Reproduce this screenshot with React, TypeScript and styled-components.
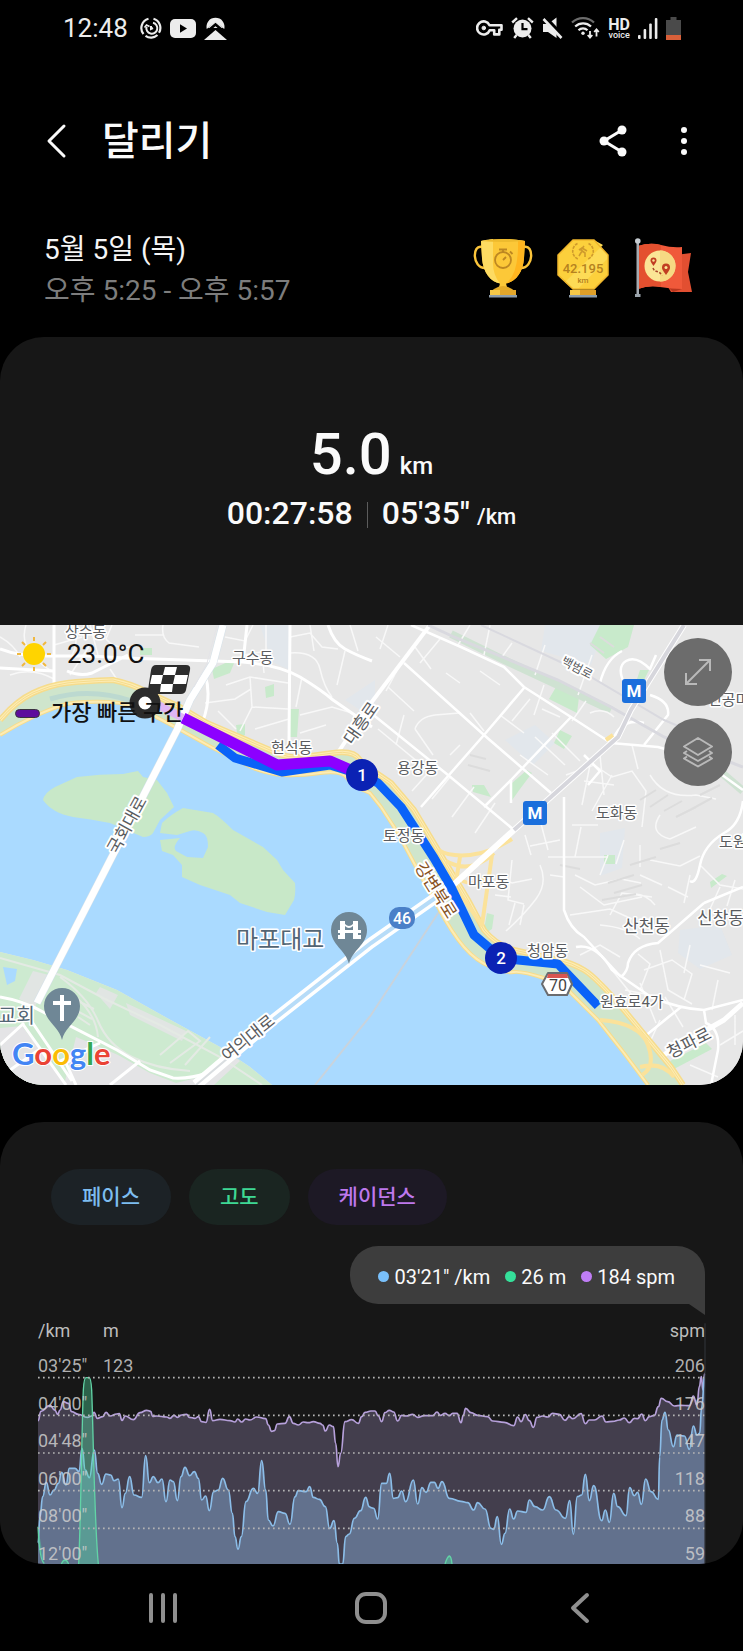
import React from "react";
import styled, { createGlobalStyle } from "styled-components";

const GlobalStyle = createGlobalStyle`
	* {
		box-sizing: border-box;
	}

	body {
		margin: 0;
		background: #000;
		color: #fafafa;
		font-family: Roboto, "Noto Sans CJK KR", sans-serif;
	}
`;

const Page = styled.div`
	display: flex;
	flex-direction: column;
`;

const IconButton = styled.button`
	display: flex;
	align-items: center;
	justify-content: center;
	padding: 0;
	border: 0;
	background: none;
	color: inherit;
	cursor: pointer;
`;

/* status bar */

const StatusBar = styled.div`
	display: flex;
	align-items: center;
	justify-content: space-between;
	height: 56px;
	padding: 0 62px 0 63px;
	color: #ececec;
`;

const StatusGroup = styled.div`
	display: flex;
	align-items: center;
	gap: ${(props: { $gap: number }) => props.$gap}px;
`;

const Clock = styled.time`
	margin-right: 4px;
	font-size: 26px;
	line-height: 30px;
`;

const HdVoice = styled.div`
	display: flex;
	flex-direction: column;
	align-items: center;
	font-size: 9px;
	line-height: 8px;
	font-weight: 500;

	b {
		font-size: 16px;
		line-height: 13px;
	}
`;

/* title */

const Header = styled.header`
	display: flex;
	align-items: center;
	height: 170px;
	padding: 0 48px 0 36px;
`;

const Title = styled.h1`
	flex: 1;
	margin: 0 0 0 26px;
	padding-top: 2px;
	font-size: 40px;
	line-height: 48px;
	font-weight: 500;
`;

const Actions = styled.div`
	display: flex;
	gap: 40px;
`;

const Summary = styled.section`
	display: flex;
	align-items: center;
	justify-content: space-between;
	padding: 3px 50px 26px 44px;
`;

const DateText = styled.p`
	margin: 0;
	font-size: 28px;
	line-height: 41px;
	color: ${(props: { $dim?: boolean }) => (props.$dim ? "#7d7d7d" : "#f5f5f5")};
`;

const Badges = styled.div`
	display: flex;
	gap: 20px;
	padding-bottom: 4px;
`;

/* distance card */

const Card = styled.section`
	overflow: hidden;
	border-radius: 44px;
	background: #171717;
`;

const Stats = styled.div`
	display: flex;
	flex-direction: column;
	align-items: center;
	height: 288px;
	padding-top: 87px;
	font-weight: 500;
`;

const Distance = styled.div`
	display: flex;
	align-items: baseline;
	gap: 8px;
	font-size: 58px;
	line-height: 60px;
`;

const StatRow = styled.div`
	display: flex;
	align-items: baseline;
	font-size: 32px;
	line-height: 34px;
`;

const Divider = styled.span`
	width: 1px;
	height: 26px;
	margin: 0 14px;
	align-self: center;
	background: #5c5c5c;
`;

const Unit = styled.small`
	font-size: ${(props: { $size: number }) => props.$size}px;
`;

const PaceUnit = styled(Unit)`
	margin-left: 7px;
`;

/* map */

const MapArea = styled.div`
	position: relative;
	height: 460px;
	background: #e8e8e8;
	color: #111;
`;

const MapDrawing = styled.svg`
	display: block;
	width: 100%;
	height: 100%;
	font-family: Roboto, "Noto Sans CJK KR", sans-serif;
`;

const MapInfo = styled.div`
	position: absolute;
	top: 8px;
	left: 15px;
`;

const Weather = styled.div`
	display: flex;
	align-items: center;
	gap: 16px;
	padding-left: 2px;
	font-size: 26px;
	line-height: 42px;
`;

const Legend = styled.div`
	display: flex;
	align-items: center;
	gap: 11px;
	margin-top: 22px;
	font-size: 22px;
	line-height: 32px;
	font-weight: 500;
`;

const LegendMark = styled.span`
	width: 25px;
	height: 9px;
	border: 1px solid #3a3340;
	border-radius: 5px;
	background: #5d0d9c;
`;

const MapButtons = styled.div`
	position: absolute;
	top: 13px;
	right: 11px;
	display: flex;
	flex-direction: column;
	gap: 12px;
`;

const RoundButton = styled(IconButton)`
	width: 68px;
	height: 68px;
	border-radius: 50%;
	background: #6c6c6c;
	color: #b9b9b9;
`;

type LabelProps = { $size?: number; $color?: string };

const PlaceName = styled.text<LabelProps>`
	fill: ${(props) => props.$color || "#5a5c60"};
	stroke: #fff;
	stroke-width: 3px;
	stroke-linejoin: round;
	paint-order: stroke;
	font-size: ${(props) => props.$size || 15}px;
`;

const RoadName = styled(PlaceName)`
	stroke-width: 4px;
	text-anchor: middle;
	dominant-baseline: central;
`;

/* chart card */

const ChartCard = styled(Card)`
	display: flex;
	flex-direction: column;
	margin-top: 37px;
	padding: 47px 38px 0;
`;

const Chips = styled.div`
	display: flex;
	gap: 18px;
	margin-left: 13px;
`;

const Chip = styled.button`
	height: 56px;
	padding: 0 31px 4px;
	border: 0;
	border-radius: 28px;
	background: ${(props: { $bg: string; $color: string }) => props.$bg};
	color: ${(props) => props.$color};
	font-family: inherit;
	font-size: 21px;
	font-weight: 500;
	cursor: pointer;
`;

const Bubble = styled.div`
	position: relative;
	display: flex;
	align-items: center;
	align-self: flex-end;
	gap: 15px;
	height: 58px;
	margin-top: 21px;
	padding: 3px 30px 0 28px;
	border-radius: 28px 28px 0 28px;
	background: #3d3d3d;
	font-size: 20px;

	&::after {
		content: "";
		position: absolute;
		top: 100%;
		right: 0;
		border-top: 11px solid #3d3d3d;
		border-left: 16px solid transparent;
	}
`;

const Reading = styled.span`
	display: flex;
	align-items: center;
	gap: 5px;

	&::before {
		content: "";
		width: 11px;
		height: 11px;
		border-radius: 50%;
		background: ${(props: { $dot: string }) => props.$dot};
	}
`;

const Units = styled.div`
	display: grid;
	grid-template-columns: 65px 1fr auto;
	margin-top: 16px;
	font-size: 18px;
	line-height: 22px;
	color: #bdbdbd;
`;

const Plot = styled.div`
	display: grid;
	height: 208px;
	margin-top: 14px;

	> * {
		grid-area: 1 / 1;
	}
`;

const PlotDrawing = styled.svg`
	display: block;
	width: 100%;
	height: 208px;
	overflow: visible;
`;

const Ticks = styled.div`
	display: flex;
	flex-direction: column;
	justify-content: space-between;
	font-size: 18px;
	line-height: 20px;
	color: rgba(205, 205, 205, 0.85);
`;

const Tick = styled.div`
	display: grid;
	grid-template-columns: 65px 1fr auto;
`;

/* bottom keys */

const NavBar = styled.nav`
	display: grid;
	grid-template-columns: repeat(3, 1fr);
	height: 87px;
	padding: 0 59px;
	color: #8f8f8f;
`;

type Point = [number, number];

const HALF = 1113;

const parse = (text: string): Point[] =>
	text
		.trim()
		.split(/\s+/)
		.map((pair) => pair.split(",").map(Number) as Point);

const series = (first: string, second: string): Point[] => [
	...parse(first),
	...parse(second).map(([x, y]): Point => [x + HALF, y]),
];

const smooth = (points: Point[]) =>
	points
		.map(([x, y], i) => {
			if (i === 0) return `M${x} ${y}`;
			const [px, py] = points[i - 1];
			const mid = (px + x) / 2;
			return `C${mid} ${py} ${mid} ${y} ${x} ${y}`;
		})
		.join("");

const area = (points: Point[]) =>
	`${smooth(points)}L${points[points.length - 1][0]} 762L${points[0][0]} 762Z`;

const cadence = series(
	`114,332 123,304 150,286 165,301 173,313 180,300 190,275 205,280 215,305 235,313 262,322 275,318 282,307 292,325
	308,320 318,307 330,318 350,312 358,311 366,331 376,318 400,329 420,308 440,301 452,304 458,319 470,318 500,321
	510,325 522,316 532,322 545,315 560,313 568,322 585,325 595,320 605,335 618,337 629,298 638,332 660,328 690,332
	705,336 713,327 725,336 737,327 750,330 770,321 797,326 805,345 815,364 823,362 832,342 855,340 868,320 880,340
	895,345 910,336 925,338 940,335 960,340 968,345 976,363 988,345 1000,350 1007,400 1014,470 1022,430 1035,335
	1055,329 1075,340 1085,320 1095,307`,
	`0,303 12,303 22,318 32,335 42,308 55,301 68,306 80,333 92,316 105,318 125,313 140,322 160,317 185,317 198,306
	208,316 222,310 235,317 245,310 258,310 270,338 277,315 284,295 300,308 320,316 350,320 365,333 400,337 428,347
	440,321 450,335 463,314 475,332 487,352 498,322 515,318 530,321 545,310 565,313 582,331 595,320 605,326 630,311
	643,341 655,330 670,330 693,318 705,336 725,334 745,330 760,324 775,338 790,325 800,326 812,312 823,332 835,320
	850,316 862,290 871,265 890,275 910,288 930,286 955,287 967,258 978,285 985,230 991,200 996,240 1001,190`
);

const pace = series(
	`114,700 120,620 128,560 139,517 150,555 162,540 175,520 185,487 198,525 208,475 225,475 237,485 246,415 256,480
	268,503 283,420 293,490 305,523 318,492 332,495 342,512 355,507 366,593 376,550 389,500 402,555 425,562 437,437
	448,518 460,500 474,518 486,507 498,575 510,510 520,515 532,572 543,500 555,472 569,497 583,485 595,505 605,570
	617,558 628,602 641,545 655,540 668,505 685,540 697,610 705,680 714,718 724,680 738,575 760,535 773,550 785,452
	797,540 805,630 819,648 835,605 855,610 870,643 885,560 895,542 918,545 929,530 940,562 958,568 976,590 989,655
	1002,632 1012,700 1018,762 1028,762 1037,680 1048,672 1063,625 1082,602 1097,562 1108,590`,
	`0,593 8,595 20,627 32,520 46,520 56,490 67,565 80,563 92,543 104,575 127,510 140,582 153,533 165,547 180,517
	190,517 201,535 213,515 235,565 270,574 290,578 308,600 320,578 342,597 360,655 368,658 379,620 391,703 402,670
	416,597 428,627 440,603 465,607 475,570 492,590 515,600 535,560 555,600 583,625 596,572 607,673 619,560 632,555
	643,493 655,572 668,527 692,632 703,600 715,637 728,550 740,590 765,617 776,533 790,557 800,547 811,583 824,507
	840,545 862,568 866,440 873,330 882,307 892,360 907,410 918,375 940,378 955,418 967,348 978,375 986,370 992,290
	1001,200`
);

const ticks = [
	["03'25\"", "123", "206"],
	["04'00\"", "", "176"],
	["04'48\"", "", "147"],
	["06'00\"", "", "118"],
	["08'00\"", "", "88"],
	["12'00\"", "", "59"],
];

function StatusIcons() {
	return (
		<StatusBar>
			<StatusGroup $gap={8}>
				<Clock>12:48</Clock>
				<svg width="22" height="22" viewBox="0 0 22 22" fill="none" stroke="currentColor">
					<path d="M8.500 1.800A9.500 9.500 0 0 0 3.500 17M5.500 18.800A9.500 9.500 0 0 0 17.500 18M19 15.800A9.500 9.500 0 0 0 13.500 1.800" strokeWidth="2.200" />
					<path d="M13 5.800a5.500 5.500 0 1 1-6.500 4" strokeWidth="2" />
					<path d="M4.500 10.500l2-2.500 3 1.500" strokeWidth="1.600" />
					<path d="M11 9v3l2-1" strokeWidth="2" />
				</svg>
				<svg width="26" height="19" viewBox="0 0 26 19">
					<rect width="26" height="19" rx="5" fill="currentColor" />
					<path d="M10 5.200v8.600l7-4.300z" fill="#000" />
				</svg>
				<svg width="23" height="23" viewBox="0 0 23 23" fill="currentColor">
					<path d="M2.800 12A9 9 0 1 1 20.200 12L11.500 4.800z" />
					<path d="M11.500 4L19 11H4z" />
					<path d="M0 23l11.500-10L23 23z" />
					<path d="M2 15.500l9.500-8 9.500 8" fill="none" stroke="#000" strokeWidth="2.600" />
				</svg>
			</StatusGroup>
			<StatusGroup $gap={8}>
				<svg width="27" height="16" viewBox="0 0 27 16" fill="none" stroke="currentColor" strokeWidth="2.600">
					<path d="M13.500 5.200H25.500V9.800H23.300V14.400H18.200V10.200H13.700A6.500 6.500 0 1 1 13.500 5.200Z" strokeLinejoin="round" />
					<circle cx="7.800" cy="8" r="1.800" fill="currentColor" strokeWidth="1" />
				</svg>
				<svg width="23" height="22" viewBox="0 0 23 22">
					<circle cx="11.500" cy="11.500" r="9" fill="currentColor" />
					<path d="M1.200 5.500L6 1.200M21.800 5.500L17 1.200M3.200 21l2.400-3M19.800 21l-2.400-3" stroke="currentColor" strokeWidth="2.400" />
					<path d="M11.500 6v6.200h5" fill="none" stroke="#000" strokeWidth="2.200" />
				</svg>
				<svg width="21" height="22" viewBox="0 0 21 22" fill="currentColor">
					<path d="M1 7h5l8.500-6.500V21L6 15H1z" />
					<path d="M2.500 .5L20.500 19.500" stroke="#000" strokeWidth="5" />
					<path d="M1.500 2L19.500 21" stroke="currentColor" strokeWidth="2.600" />
				</svg>
				<svg width="29" height="22" viewBox="0 0 29 22" fill="none" stroke="currentColor" strokeWidth="2.200">
					<path d="M1 5.500A16 16 0 0 1 23 5.500" stroke="#6c6c6c" />
					<path d="M4.200 9.500A11.500 11.500 0 0 1 20 9.500M7.500 13.200A6.500 6.500 0 0 1 16.500 13.200" />
					<circle cx="12" cy="16.200" r="1.700" fill="currentColor" stroke="none" />
					<path d="M19 14v6M16.700 18l2.300 2.600 2.300-2.600M25.500 19.500v-6.500M23.200 15l2.300-2.600 2.300 2.600" strokeWidth="1.800" />
				</svg>
				<HdVoice>
					<b>HD</b>
					voice
				</HdVoice>
				<svg width="20" height="21" viewBox="0 0 20 21" fill="currentColor">
					<rect y="17" width="2.600" height="4" rx="1" />
					<rect x="5.600" y="11" width="2.600" height="10" rx="1" />
					<rect x="11.200" y="5.500" width="2.600" height="15.500" rx="1" />
					<rect x="16.800" width="2.600" height="21" rx="1" />
				</svg>
				<svg width="15" height="23" viewBox="0 0 15 23">
					<path d="M4.500 0h6v3H15v20H0V3h4.500z" fill="#4a4a4a" />
					<path d="M0 18h15v5H0z" fill="#d9603a" />
				</svg>
			</StatusGroup>
		</StatusBar>
	);
}

function TrophyBadge() {
	return (
		<svg width="60" height="60" viewBox="0 0 60 60" role="img" aria-label="최고 기록">
			<g fill="none" stroke="#fbc43a" strokeWidth="2.400">
				<path d="M9 9C-1 6-1 30 12 30" />
				<path d="M51 9C61 6 61 30 48 30" />
			</g>
			<path d="M8 3Q30-1 52 3L51 20C50 35 42 44 33 45.500L34 49H26L27 45.500C18 44 10 35 9 20Z" fill="#fcc838" />
			<path d="M8 3Q14 1.500 20 1L20 25Q20 37 27 45.500C18 44 10 35 9 20Z" fill="#fddb62" />
			<path d="M45 2L52 3L51 20C50 35 42 44 33 45.500Q46 36 45 2" fill="#ffb51f" />
			<path d="M8 3Q30-1 52 3Q30 5 8 3" fill="#eebb2e" />
			<path d="M21 51Q30 45 39 51L43 54H17Z" fill="#e6ac28" />
			<path d="M17 52h26v5H17z" fill="#e2a62a" />
			<path d="M17 52h10v5H17z" fill="#f5c848" />
			<path d="M16 57h28v2.500H16z" fill="#8d9daa" />
			<g fill="none" stroke="#bd8722" strokeWidth="1.800">
				<circle cx="30" cy="22" r="8" />
				<path d="M30 22l3-3M26 11.500h8M30 12v3M37 13.500l2.500 2.500" />
			</g>
		</svg>
	);
}

function DistanceBadge() {
	return (
		<svg width="60" height="60" viewBox="0 0 60 60" role="img" aria-label="42.195 km">
			<path d="M20 2H41L55 17V37L41 51H20L5 37V17Z" fill="#fcd03c" />
			<path d="M41 2L55 17V20L25 51H20L12 44L50 7Z" fill="#fddb56" />
			<path d="M20 2H41L55 17V37L41 51H20L5 37V17Z" fill="none" stroke="#f0b62c" strokeWidth="1.500" />
			<g fill="none" stroke="#cf9a2c" strokeWidth="1.600">
				<path d="M24.500 5.500A8.500 8.500 0 0 0 25 21M35.500 5.500A8.500 8.500 0 0 1 35 21" strokeDasharray="3 1" />
				<path d="M31 8l-3 4 4 3v4M26 12l3-2 5 3M29 13l-3 5" />
			</g>
			<text x="30" y="35" textAnchor="middle" fontSize="13" fontWeight="500" fill="#b58220">42.195</text>
			<text x="30" y="45" textAnchor="middle" fontSize="8" fontWeight="500" fill="#b58220">km</text>
			<path d="M17 52h26v5H17z" fill="#df9f28" />
			<path d="M17 52h10v5H17z" fill="#f5c848" />
			<path d="M16 57h28v2.500H16z" fill="#8d9daa" />
		</svg>
	);
}

function FlagBadge() {
	return (
		<svg width="60" height="60" viewBox="0 0 60 60" role="img" aria-label="경로">
			<path d="M35 49V18L58 15L55 34L59 54H38Z" fill="#e24f31" />
			<path d="M35 49L49 48V51L40 54Z" fill="#b8371f" />
			<path d="M5 8Q17 4 28 7T49 9V51Q39 51 27 49T5 51Z" fill="#f0593a" />
			<path d="M5 8Q17 4 28 7V49Q16 47 5 51Z" fill="#e4502f" />
			<circle cx="27" cy="28" r="15.500" fill="#fbe596" />
			<path d="M27 12.500a15.500 15.500 0 0 1 0 31z" fill="#f6d983" />
			<g fill="#c13c22">
				<path d="M20.500 28C18 24.500 17.500 23.500 17.500 22.500a3 3 0 0 1 6 0C23.500 23.500 23 24.500 20.500 28z" />
				<path d="M33 37C29.500 32 29 31 29 29.500a4 4 0 0 1 8 0C37 31 36.500 32 33 37z" />
			</g>
			<circle cx="20.500" cy="22.500" r="1.200" fill="#fbe596" />
			<circle cx="33" cy="29.500" r="1.500" fill="#fbe596" />
			<path d="M20 30q1 3 4 3.500t5 4" fill="none" stroke="#a8452a" strokeWidth="1.500" strokeDasharray="2.500 1.500" />
			<path d="M3.500 3h2.500v53H3.500z" fill="#a4abb2" />
			<circle cx="4.800" cy="3" r="2.800" fill="#c6ccd1" />
			<path d="M2 56h5.500v3H2z" fill="#9aa3ab" />
		</svg>
	);
}

function MetroSign({ x, y }: { x: number; y: number }) {
	return (
		<g>
			<rect x={x} y={y} width="24" height="24" rx="3" fill="#1b6fdc" />
			<text x={x + 12} y={y + 18} textAnchor="middle" fontSize="17" fontWeight="700" fill="#fff">M</text>
		</g>
	);
}

const northBank =
	"M0 110Q16 100 33 92T63 80T110 77Q128 78 143 85L177 103L213 123L253 143Q268 149 283 150T320 148T347 153T370 168L381 182L398 208L414 238L438 282Q452 308 464 322T491 342T514 347T544 353T571 368L598 395L624 428L648 460";
const upperHighway =
	"M0 95Q16 76 33 68T67 58T113 55Q132 59 147 67L180 82L207 98L277 128Q288 133 300 132T333 128T360 135T372 145L391 158L414 185L438 225L468 275L484 305Q496 320 514 325L558 335Q572 338 584 345T624 385L671 442L683 460";

function RouteMap() {
	return (
		<MapDrawing viewBox="0 0 743 460" preserveAspectRatio="xMidYMid slice" role="img" aria-label="달리기 경로 지도">
			<rect width="743" height="460" fill="#e7e7e7" />

			{/* blocks and parks */}
			<path d="M260 0h30v45l-18-8zM545 0h60l-14 40l-50-14zM505 115l30-15l20 18l-22 22zM600 208l25-5l-3 40l-22 8zM680 305l40-5l12 30l-32 14l-22-16zM345 75l30-20v40z" fill="#e2e7ec" />
			<g fill="#c8eacb">
				<path d="M212 44l18-8h5l-5 12l-16 6zM290 84h9l-2 28h-9zM265 62l9-3v12l-8 2zM236 100l9-1v11l-7 4zM140 23h12v7h-12z" />
				<path d="M600 0h34l-6 22l-22 12l-16-14zM556 62l24 2l-3 24l-28-14zM560 105l12 6l-8 13l-10-6zM527 145l5 3l-12 16l-10 14l2-20zM472 160l12 0l7 12l-18-5zM604 230h11v9h-11zM487 288l7 2l-2 14l-9 6zM710 257l12-8l5 2l-16 12zM640 45h9l-6 12l-6-3z" />
				<path d="M670 436l36-18l6 6l-38 20z" />
			</g>
			<path d="M451 9L504 35L558 60L611 85" fill="none" stroke="#cfe2d2" strokeWidth="8" />
			<path d="M722 148l21 18" stroke="#cfe2d2" strokeWidth="8" />

			{/* side streets */}
			<g fill="none" stroke="#f8f8f8" strokeWidth="1.500">
				<path d="M0 12Q14 20 20 32M26 0q-6 18 8 32t20 14M72 0q8 16 0 30M90 0l8 30M112 0l-6 14q8 10 24 8M135 10l28 0M163 0q-2 12 6 18l30 4M54 20l28-8M10 50q22-8 44 4M70 50l20-30M110 44l8 12" />
				<path d="M225 12l20 4l8-16M244 30l22-4v-26M262 26l2 22M226 60l24-8l38 6M205 78l30-4l16-10M250 52l2 30l-12 24M252 82l36 2M218 86l18 18M255 104l34-10M290 12l20-4l12 14l16 2M290 28q26-2 30 16t12 28M302 52l-6 30M300 90l32-8l20 6M310 0l4 26M350 0l8 26M345 26l-8 34M300 108l26-8" />
				<path d="M376 12l24 20M388 0l-8 24M415 22l16 22M440 14l-20 24M446 48l14 10M400 40l-14 26M388 62l26 24M415 104q4-12 20-14l24-2M415 104l18 26M404 90l-8 30M378 104l46 38M430 146l-18 20M450 152l-18 22M474 162l-22 30M495 178l-20 30M460 120l-10 10M470 88l14 18M500 90l24 18M530 74l-18 22M544 60l-10 30M560 92l-18-8M586 76l-14 20M590 88q14-6 24 4M470 0l-12 20M490 0l-6 30M512 18l-10 14M500 60l-20-14M545 20l-10 30M520 130l28 20M535 112l30 28M552 108l28 28M578 70l14-40" />
				<path d="M566 150l28-10l18 12l20-6l14 20l-4 36M590 140l-8 40M600 130l4 40M612 150l-20 36M584 156l30 4M572 200h26M560 215l-30 6M540 195l8 30M525 210l6 20M548 232h60M575 232l6-30M632 120l6 24M650 150q14 24 46 20l20 4M660 190q-12 18 10 24l26-12M624 215l-8 24M640 220v22" />
				<path d="M500 250l12 8l20-4M540 240q8 18-4 34t-30 32M512 235l-4 40l16 4M495 270l16 2M515 278l-6 22M520 300l4-20M550 250l14 2M575 250l20 10l26-6l20 4M580 262l24 18l38-8M570 290l40-6l22 10M600 250l8-20M610 290l12-22l30 4M640 250l22 10M650 235l30 6l20-10M655 280q-12-14-26-10M600 300q26 2 40 14M668 262l20 10M690 250l-6 28M700 240l20 20l23 4M720 262l-10 22M735 255l-8 26" />
				<path d="M644 345l28-10l20 14l-8 26M660 325l8 40l24 14M640 365l10-26l-12-10M690 320l-6 28M700 340l30 8M712 385l6-30M625 365l30 6M640 358l16 40M665 372l18 30M670 390l-26 22M600 355l26 32M612 345l24 30M660 395l-10 22M720 420l23-14M690 440l28 12M735 390v30M580 330l20-10l20 12" />
			</g>
			<g fill="none" stroke="#dcdcdc" strokeWidth="2">
				<path d="M640 175l16-10M650 182l18-12M664 186l18-10M676 192l20-10M690 185l22-12M700 170l20-10M608 258l26-8M614 268l28-8M602 275l34-6M630 240l26-8M660 224l20-6M560 240l20 4M470 130l16 4M468 140l22 6M590 18l14 10M600 12l14 10" />
			</g>

			{/* main streets */}
			<g fill="none" stroke="#fff" strokeWidth="3" strokeLinejoin="round">
				<path d="M0 24Q20 32 54 31H90L125 33L243 37M0 43L53 46M54 0V66M67 46Q80 52 92 48L128 30M243 37Q280 40 300 52T333 75L372 102M290 0L289 118M328 0Q334 18 345 24T372 36M247 0L243 37M205 50Q212 70 203 96" />
				<path d="M411 0L461 22L504 42L524 62L571 92L611 118L658 122L700 134L743 165M404 38L484 110L551 168M371 88L448 150L514 205M524 63L484 110L421 182M571 92L511 155L484 182M511 155V178M564 172V285Q570 304 584 312L621 352M584 130L600 146L588 160" strokeWidth="2.500" />
				<path d="M704 278L658 318Q634 320 628 338Q628 346 621 352M576 322Q596 318 612 345L651 372Q680 384 704 385L743 375M704 278L743 262M743 176Q740 200 724 208Q704 220 700 240T690 256M704 385L706 398Q720 404 718 425L711 460M644 412L681 382M612 118Q620 92 644 98M625 60Q616 42 626 36T650 44L656 30M650 70Q670 76 668 90L644 120M600 58Q606 34 622 26" strokeWidth="2.500" />
				<path d="M621 460L671 425L724 395L743 378" strokeWidth="5" />
			</g>
			<path d="M430 0L371 78L335 132" fill="none" stroke="#fff" strokeWidth="4" />
			<g fill="none" stroke="#d9d9df" strokeWidth="3">
				<path d="M428 0L454 12L558 55L611 82L664 112L743 142" />
				<path d="M481 0L584 48L664 95L690 106" strokeWidth="2" />
			</g>

			{/* river */}
			<path d={`${upperHighway}H648L624 428L598 395L571 368L544 353L514 347L491 342L464 322L438 282L414 238L398 208L381 182L370 168L347 153L320 148L283 150L253 143L213 123L177 103L143 85L110 77L63 80L33 92L0 110Z`} fill="#cfe5cc" />
			<path d="M50 74Q90 62 132 76" fill="none" stroke="#bcd9d0" strokeWidth="5" />
			<path d={`${northBank}H272L250 442L220 422L167 393L117 365L67 345L33 335L0 327Z`} fill="#aadaff" />
			<path d="M43 175Q44 168 55 162L77 152Q100 149 123 149L138 146L143 152L157 155L167 168L174 182L160 195L153 208Q150 212 143 212L110 198Q90 194 73 192Q52 188 43 175Z" fill="#c8e8c8" />
			<path d="M183 183L213 188Q220 192 233 205L263 222L277 235L283 245L295 258Q296 268 294 275L285 290L267 287L240 278L230 270L200 260L182 252V240L173 230L162 226L160 215L180 213Q172 222 176 226L187 232L203 233L208 222Q208 210 203 208Q196 204 190 206L177 210L160 208L162 198Q170 190 183 183Z" fill="#c8e8c8" />
			<path d="M450 270L371 390L315 460" fill="none" stroke="#c9d3dc" strokeWidth="2" />

			{/* south bank */}
			<path d="M0 327L33 335L67 345L117 365L167 393L220 422L250 442L272 460H0Z" fill="#cdead0" />
			<path d="M0 403L22 401L66 460H0ZM76 412Q96 420 118 430L150 448L176 458L200 452L230 428L240 436L214 460H64Z" fill="#e4e4e6" />
			<path d="M33 346l16 4l-14 32l-16-8zM100 362l18 8l-8 14l-14-16zM126 378l60 28l-4 10l-52-26z" fill="#e1e5e3" />
			<path d="M3 342l14 2l-2 12l-8 4z" fill="#aadaff" />
			<g fill="none" stroke="#e4eae4" strokeWidth="2">
				<path d="M0 333L60 350L105 374L160 400L220 432L262 460M60 352Q88 372 98 396T132 432T190 446M98 412Q96 390 76 372M160 430L188 406L200 416L170 438M185 440L210 412M66 380l26 14M70 372l24 12M78 392l12 8" />
			</g>
			<g fill="none" stroke="#fff" strokeWidth="3">
				<path d="M0 372Q24 376 43 387L117 425L150 445L173 453Q190 454 207 448M22 398L66 460M30 394L72 456M0 420L24 398M60 436L100 418M76 460L66 438L90 424M110 460L140 436M0 452L40 424" />
			</g>

			{/* riverside highways */}
			<g fill="none" strokeLinejoin="round">
				<path d={northBank} stroke="#f6dc8c" strokeWidth="4" />
				<path d={northBank} stroke="#fdecb4" strokeWidth="2" />
				<path d={upperHighway} stroke="#f6dc8c" strokeWidth="6" />
				<path d={upperHighway} stroke="#fdecb4" strokeWidth="3" />
				<path d={upperHighway} stroke="#f6dc8c" strokeWidth="1" />
				<path d="M438 225Q450 232 470 230T512 214M446 236Q470 250 494 228M460 232L455 262L482 300L492 230M462 256Q478 262 490 250M600 395Q640 398 648 420T642 450M640 442Q662 436 674 452M606 115l7-5" stroke="#fbe29a" strokeWidth="4" />
			</g>

			{/* bridges */}
			<path d="M223 0L213 38L190 75L177 105L37 378" fill="none" stroke="#d4e1ea" strokeWidth="8" strokeLinejoin="round" />
			<path d="M223 0L213 38L190 75L177 105L37 378" fill="none" stroke="#fff" strokeWidth="7" strokeLinejoin="round" />
			<path d="M217 0L207 38L194 62" fill="none" stroke="#e4e4e8" strokeWidth="1" />
			<path d="M684 0L631 85L618 112L514 205L451 262" fill="none" stroke="#fff" strokeWidth="6" />
			<path d="M684 0L631 85L618 112L514 205" fill="none" stroke="#d6d6dc" strokeWidth="4" />
			<path d="M451 262L371 318L273 395L196 460" fill="none" stroke="#fff" strokeWidth="11" />
			<path d="M451 262L371 318L273 395" fill="none" stroke="#b7dcf8" strokeWidth="4" />
			<path d="M273 395L196 460" fill="none" stroke="#d9dde0" strokeWidth="2" />

			<PlaceName x="65" y="12">상수동</PlaceName>
			<PlaceName x="232" y="38">구수동</PlaceName>
			<PlaceName x="271" y="128">현석동</PlaceName>
			<PlaceName x="397" y="148">용강동</PlaceName>
			<PlaceName x="596" y="193">도화동</PlaceName>
			<PlaceName x="719" y="222">도원</PlaceName>
			<PlaceName x="708" y="80">인공미</PlaceName>
			<PlaceName x="468" y="262">마포동</PlaceName>
			<PlaceName x="623" y="307" $size={17}>산천동</PlaceName>
			<PlaceName x="697" y="299" $size={17}>신창동</PlaceName>

			{/* run */}
			<g fill="none" strokeLinejoin="round">
				<path d="M598 381L558 339L518 335L501 333L474 310L451 262L434 233L401 182L378 158L362 150L330 140L282 147L235 133L218 120" stroke="#0a62f8" strokeWidth="9" />
				<path d="M362 150L330 136L277 140L233 118L183 93" stroke="#8c00ff" strokeWidth="11" />
				<path d="M183 93L158 80L152 68" stroke="#dfb6f5" strokeWidth="8" />
			</g>

			<PlaceName x="383" y="216">토정동</PlaceName>
			<PlaceName x="527" y="331">청암동</PlaceName>
			<PlaceName x="600" y="382">원효로4가</PlaceName>

			<RoadName transform="translate(127 200) rotate(-61)" $size={17}>국회대로</RoadName>
			<RoadName transform="translate(361 98) rotate(-55)" $size={17}>대흥로</RoadName>
			<RoadName transform="translate(577 43) rotate(28)" $size={12}>백범로</RoadName>
			<RoadName transform="translate(436 265) rotate(58)" $size={17} $color="#87531f">강변북로</RoadName>
			<RoadName transform="translate(248 413) rotate(-39)" $size={17}>여의대로</RoadName>
			<RoadName transform="translate(689 418) rotate(-27)" $size={17}>청파로</RoadName>

			<MetroSign x={622} y={54} />
			<MetroSign x={523} y={176} />
			<rect x="389" y="282" width="26" height="22" rx="10" fill="#4a80c8" />
			<text x="402" y="299" textAnchor="middle" fontSize="16" fontWeight="500" fill="#fff">46</text>
			<path d="M548 348H567L572 359L567 370H548L542 359Z" fill="#fff" stroke="#6a6c70" strokeWidth="2" strokeLinejoin="round" />
			<path d="M548 349H567L568 353H547Z" fill="#d95550" />
			<text x="558" y="366" textAnchor="middle" fontSize="16" fill="#444">70</text>

			{/* landmarks */}
			<g fill="#6f8796">
				<path d="M349 339C346 325 331 320 331 305a18 18 0 0 1 36 0C367 320 352 325 349 339z" />
				<path d="M62 415C59 401 44 396 44 381a18 18 0 0 1 36 0C80 396 65 401 62 415z" />
			</g>
			<g fill="#fff">
				<path d="M340 296h5v18h-7v-4h2zM353 296h5v14h3v4h-8zM338 305h23v3h-23zM345 299q4 4 8 0v2q-4 4-8 0z" />
				<path d="M60 370h4v6h7v4h-7v16h-4v-16h-7v-4h7z" />
			</g>
			<PlaceName x="236" y="323" $size={24} $color="#526574">마포대교</PlaceName>
			<PlaceName x="-2" y="398" $size={20} $color="#526574">교회</PlaceName>

			<text x="12" y="440" fontFamily="Lato, sans-serif" fontSize="31" fontWeight="700" stroke="#fff" strokeWidth="2" paintOrder="stroke">
				<tspan fill="#4285f4">G</tspan>
				<tspan fill="#ea4335">o</tspan>
				<tspan fill="#fbbc05">o</tspan>
				<tspan fill="#4285f4">g</tspan>
				<tspan fill="#34a853">l</tspan>
				<tspan fill="#ea4335">e</tspan>
			</text>

			{/* kilometre and finish markers */}
			<g fill="#0b22b4">
				<circle cx="362" cy="150" r="16" />
				<circle cx="501" cy="333" r="16" />
			</g>
			<g fill="#fff" fontSize="17" fontWeight="500" textAnchor="middle">
				<text x="362" y="156">1</text>
				<text x="501" y="339">2</text>
			</g>
			<circle cx="145" cy="78" r="11" fill="#fff" stroke="#2c2c2c" strokeWidth="9" />
			<path d="M156 40H186Q191 40 190 45L186 65Q185 69 181 69H152Q148 69 148 65L151 45Q152 40 156 40Z" fill="#2c2c2c" />
			<path d="M165 42h12l-2 8h-12zM152 50h11l-2 9h-11zM175 50h13l-2 9h-13zM161 59h12l-1 8h-12z" fill="#fff" />
		</MapDrawing>
	);
}

function RunChart() {
	return (
		<PlotDrawing viewBox="114 138 2001 624" preserveAspectRatio="none" aria-hidden="true">
			<path d={area(cadence)} fill="#433e4d" />
			<path d={area(pace)} fill="#62718d" />
			<g fill="none" strokeWidth="5" strokeLinejoin="round">
				<path d={smooth(cadence)} stroke="#b6a0da" />
				<path d={smooth(pace)} stroke="#8bbde8" />
			</g>
			<g fill="rgba(80, 220, 160, 0.38)" stroke="#62d3a6" strokeWidth="4">
				<path d="M236 762C242 640 246 330 250 240Q252 203 258 203H267Q273 203 275 240C279 330 283 640 295 762" />
				<path d="M114 650Q119 755 133 760M184 762Q195 738 206 762M1335 762Q1342 740 1348 738Q1354 740 1356 762" />
			</g>
			<g stroke="#b4b4b4" strokeWidth="5" strokeDasharray="5 10">
				{[203, 316, 429, 542, 655].map((y) => (
					<path key={y} d={`M114 ${y}H2115`} />
				))}
			</g>
			<path d="M2115 40V762" stroke="#33363c" strokeWidth="3" />
		</PlotDrawing>
	);
}

function App() {
	return (
		<Page>
			<GlobalStyle />
			<StatusIcons />

			<Header>
				<IconButton aria-label="뒤로">
					<svg width="40" height="40" viewBox="0 0 40 40" fill="none" stroke="currentColor" strokeWidth="3" strokeLinecap="round" strokeLinejoin="round">
						<path d="M28 5L13 20L28 35" />
					</svg>
				</IconButton>
				<Title>달리기</Title>
				<Actions>
					<IconButton aria-label="공유">
						<svg width="40" height="40" viewBox="0 0 40 40" fill="currentColor">
							<path d="M29 9L11 20L29 31" fill="none" stroke="currentColor" strokeWidth="3" />
							<circle cx="29" cy="9" r="4.500" />
							<circle cx="11" cy="20" r="4.500" />
							<circle cx="29" cy="31" r="4.500" />
						</svg>
					</IconButton>
					<IconButton aria-label="더보기">
						<svg width="22" height="40" viewBox="0 0 22 40" fill="currentColor">
							<circle cx="11" cy="9" r="3" />
							<circle cx="11" cy="20" r="3" />
							<circle cx="11" cy="31" r="3" />
						</svg>
					</IconButton>
				</Actions>
			</Header>

			<Summary>
				<div>
					<DateText>5월 5일 (목)</DateText>
					<DateText $dim>오후 5:25 - 오후 5:57</DateText>
				</div>
				<Badges>
					<TrophyBadge />
					<DistanceBadge />
					<FlagBadge />
				</Badges>
			</Summary>

			<Card>
				<Stats>
					<Distance>
						5.0 <Unit $size={24}>km</Unit>
					</Distance>
					<StatRow>
						<span>00:27:58</span>
						<Divider />
						<span>05'35"</span>
						<PaceUnit $size={22}>/km</PaceUnit>
					</StatRow>
				</Stats>
				<MapArea>
					<RouteMap />
					<MapInfo>
						<Weather>
							<svg width="34" height="34" viewBox="0 0 34 34">
								<circle cx="17" cy="17" r="11" fill="#ffd400" />
								<path d="M17 0v4M17 30v4M0 17h4M30 17h4M5 5l3 3M26 26l3 3M5 29l3-3M26 8l3-3" stroke="#f0b840" strokeWidth="2" />
							</svg>
							23.0°C
						</Weather>
						<Legend>
							<LegendMark />
							가장 빠른 구간
						</Legend>
					</MapInfo>
					<MapButtons>
						<RoundButton aria-label="지도 확대">
							<svg width="30" height="30" viewBox="0 0 30 30" fill="none" stroke="currentColor" strokeWidth="2">
								<path d="M3 27L27 3M16 3H27V14M3 16V27H14" />
							</svg>
						</RoundButton>
						<RoundButton aria-label="지도 종류">
							<svg width="32" height="32" viewBox="0 0 32 32" fill="none" stroke="currentColor" strokeWidth="2" strokeLinejoin="round">
								<path d="M16 2L30 10.500L16 19L2 10.500ZM5 15L2 17L16 25L30 17L27 15M5 20.500L2 22.500L16 30.500L30 22.500L27 20.500" />
							</svg>
						</RoundButton>
					</MapButtons>
				</MapArea>
			</Card>

			<ChartCard>
				<Chips>
					<Chip $bg="#1c2226" $color="#7dbdf0">페이스</Chip>
					<Chip $bg="#1a2521" $color="#3ed894">고도</Chip>
					<Chip $bg="#1d1925" $color="#bd78ec">케이던스</Chip>
				</Chips>
				<Bubble>
					<Reading $dot="#79c0fb">03'21" /km</Reading>
					<Reading $dot="#35e09a">26 m</Reading>
					<Reading $dot="#bf7df5">184 spm</Reading>
				</Bubble>
				<Units>
					<span>/km</span>
					<span>m</span>
					<span>spm</span>
				</Units>
				<Plot>
					<RunChart />
					<Ticks>
						{ticks.map(([left, middle, right]) => (
							<Tick key={left}>
								<span>{left}</span>
								<span>{middle}</span>
								<span>{right}</span>
							</Tick>
						))}
					</Ticks>
				</Plot>
			</ChartCard>

			<NavBar>
				<IconButton aria-label="최근 앱">
					<svg width="32" height="32" viewBox="0 0 32 32" stroke="currentColor" strokeWidth="4" strokeLinecap="round">
						<path d="M4 3V29M16 3V29M28 3V29" />
					</svg>
				</IconButton>
				<IconButton aria-label="홈">
					<svg width="34" height="34" viewBox="0 0 34 34" fill="none" stroke="currentColor" strokeWidth="4">
						<rect x="3" y="3" width="28" height="28" rx="9" />
					</svg>
				</IconButton>
				<IconButton aria-label="뒤로 가기">
					<svg width="32" height="32" viewBox="0 0 32 32" fill="none" stroke="currentColor" strokeWidth="4" strokeLinecap="round" strokeLinejoin="round">
						<path d="M23 3L9 16L23 29" />
					</svg>
				</IconButton>
			</NavBar>
		</Page>
	);
}

export default App;
